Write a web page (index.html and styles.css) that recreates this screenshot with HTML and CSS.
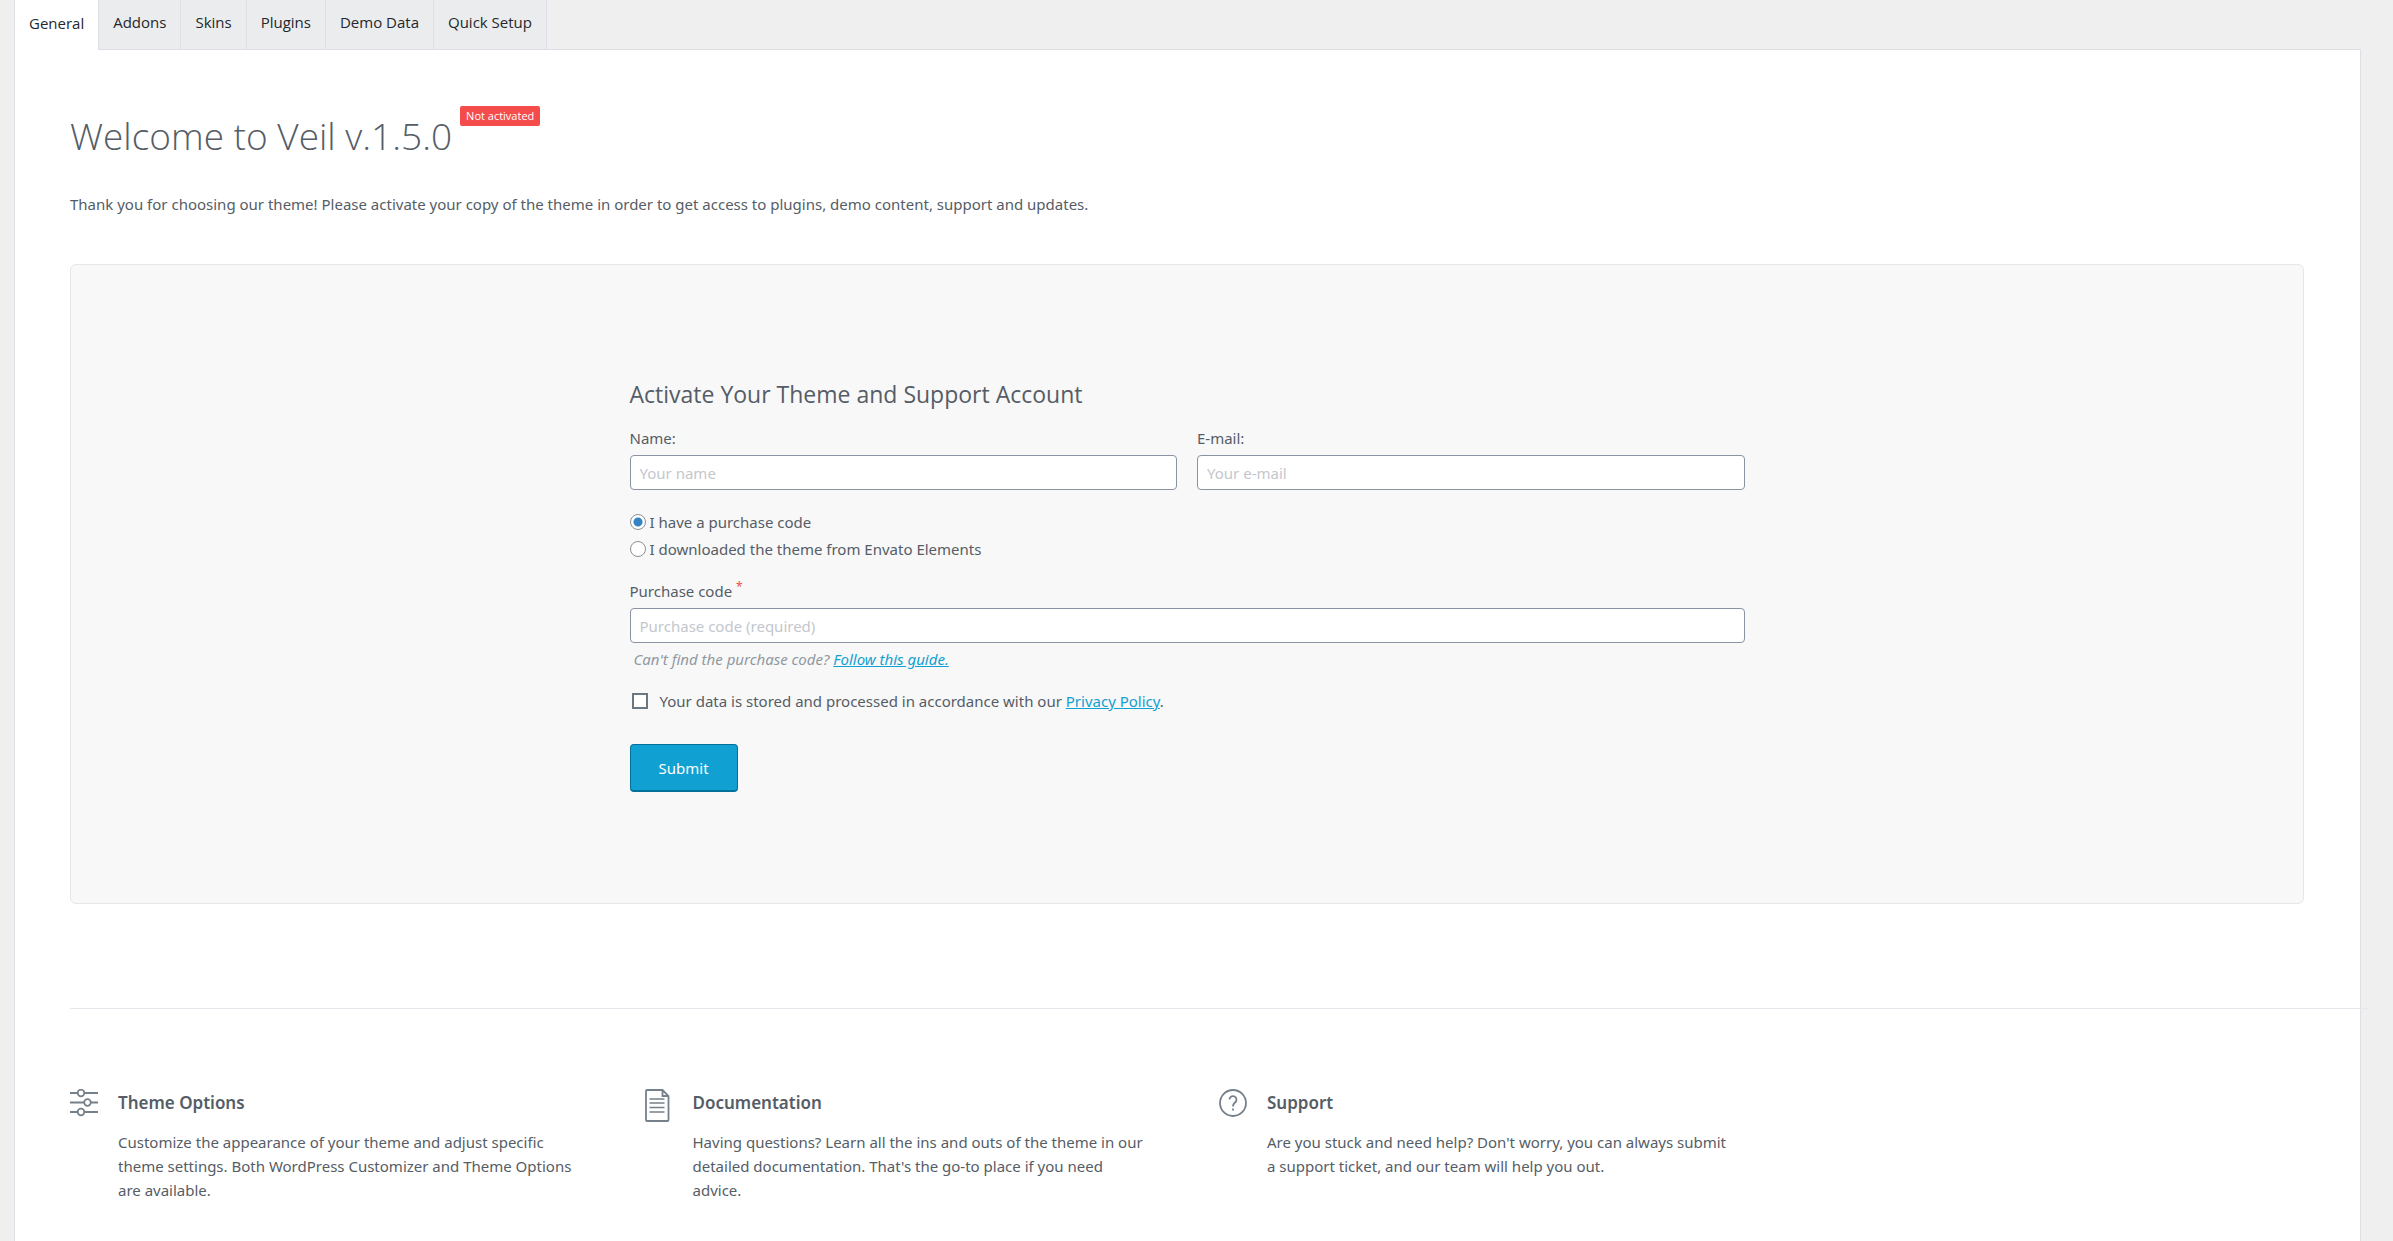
FILE: index.html
```
<!DOCTYPE html>
<html lang="en">
<head>
  <meta charset="UTF-8">
  <meta name="viewport" content="width=device-width, initial-scale=1.0">
  <title>Veil Dashboard</title>
  <link rel="stylesheet" href="styles.css">
</head>
<body>
  <nav class="tabs">
    <a class="tab active" href="#general">General</a>
    <a class="tab" href="#addons">Addons</a>
    <a class="tab" href="#skins">Skins</a>
    <a class="tab" href="#plugins">Plugins</a>
    <a class="tab" href="#demo">Demo Data</a>
    <a class="tab" href="#setup">Quick Setup</a>
  </nav>

  <main class="panel" id="general">
    <header class="welcome">
      <h1>Welcome to Veil v.1.5.0</h1>
      <span class="status">Not activated</span>
    </header>
    <p class="intro">Thank you for choosing our theme! Please activate your copy of the theme in order to get access to plugins, demo content, support and updates.</p>

    <section class="card">
      <form class="activate">
        <h2>Activate Your Theme and Support Account</h2>

        <div class="row">
          <div class="field">
            <label for="name">Name:</label>
            <input class="text" type="text" id="name" placeholder="Your name">
          </div>
          <div class="field">
            <label for="email">E-mail:</label>
            <input class="text" type="email" id="email" placeholder="Your e-mail">
          </div>
        </div>

        <div class="choices">
          <label class="choice"><input type="radio" name="source" checked> I have a purchase code</label>
          <label class="choice"><input type="radio" name="source"> I downloaded the theme from Envato Elements</label>
        </div>

        <div class="field">
          <label for="code">Purchase code <sup>*</sup></label>
          <input class="text" type="text" id="code" placeholder="Purchase code (required)">
        </div>
        <p class="hint">Can't find the purchase code? <a href="#guide">Follow this guide.</a></p>

        <div class="agree">
          <input type="checkbox" id="agree">
          <label for="agree">Your data is stored and processed in accordance with our <a href="#privacy">Privacy Policy</a>.</label>
        </div>

        <button class="btn" type="submit">Submit</button>
      </form>
    </section>

    <section class="features">
      <article class="feature">
        <svg class="icon" viewBox="0 0 28 38" width="28" height="38">
          <path d="M0 4h7M15 4h13M0 13.5h14M21 13.5h7M0 23h7M15 23h13"/>
          <circle cx="11" cy="4" r="3.3"/>
          <circle cx="17.5" cy="13.5" r="3.3"/>
          <circle cx="11" cy="23" r="3.3"/>
        </svg>
        <div class="feature-text">
          <h3>Theme Options</h3>
          <p>Customize the appearance of your theme and adjust specific theme settings. Both WordPress Customizer and Theme Options are available.</p>
        </div>
      </article>
      <article class="feature">
        <svg class="icon" viewBox="0 0 28 38" width="28" height="38">
          <path d="M1 2q0-1 1-1h15.5l6 6v24q0 1-1 1H2q-1 0-1-1zM17.5 1v6h6"/>
          <path class="thin" d="M4.5 10h15M4.5 14h15M4.5 18.5h15M4.5 23h15"/>
        </svg>
        <div class="feature-text">
          <h3>Documentation</h3>
          <p>Having questions? Learn all the ins and outs of the theme in our detailed documentation. That's the go-to place if you need<br> advice.</p>
        </div>
      </article>
      <article class="feature">
        <svg class="icon" viewBox="0 0 28 38" width="28" height="38">
          <circle cx="14" cy="14" r="13"/>
          <path d="M10.5 10.500a3.5 3.5 0 1 1 5.5 3q-2 1.500-2 4M14 19.5v2"/>
        </svg>
        <div class="feature-text">
          <h3>Support</h3>
          <p>Are you stuck and need help? Don't worry, you can always submit a support ticket, and our team will help you out.</p>
        </div>
      </article>
    </section>
  </main>
</body>
</html>
```
FILE: styles.css
```
* {
  box-sizing: border-box;
}

body {
  margin: 0;
  min-height: 100vh;
  display: flex;
  flex-direction: column;
  font-family: "Noto Sans", "Open Sans", sans-serif;
  font-size: 15px;
  line-height: 24px;
  color: #555d66;
  background: #efefef;
}

h1, h2, h3, p {
  margin: 0;
}

a {
  color: #11a0d2;
}

/* Tabs */
.tabs {
  display: flex;
  padding-left: 14px;
  font-family: "Open Sans", "Noto Sans", sans-serif;
}

.tab {
  height: 49px;
  padding: 10px 14px 0;
  border-right: 1px solid #dcdfe3;
  background: #ebecee;
  color: #23282d;
  font-weight: 500;
  text-decoration: none;
}

.tab.active {
  height: 50px;
  margin-bottom: -1px;
  padding-top: 11px;
  border-left: 1px solid #dcdfe3;
  background: #fff;
  z-index: 1;
}

/* Panel */
.panel {
  flex: 1;
  margin: 0 32px 0 14px;
  padding: 52px 56px 32px 55px;
  border: 1px solid #dcdfe3;
  border-bottom: none;
  background: #fff;
}

.welcome {
  display: flex;
  align-items: flex-start;
  gap: 8px;
  font-family: "Open Sans", "Noto Sans", sans-serif;
}

.welcome h1 {
  padding-top: 8px;
  font-size: 37px;
  line-height: 52px;
  font-weight: 300;
}

.status {
  margin-top: 4px;
  padding: 0 6px;
  border-radius: 2px;
  background: #f44b4b;
  color: #fff;
  font-size: 11px;
  line-height: 20px;
}

.intro {
  margin-top: 30px;
}

/* Activation form */
.card {
  margin-top: 48px;
  padding: 111px 25%;
  border: 1px solid #e5e7e9;
  border-radius: 6px;
  background: #f8f8f8;
}

.activate h2 {
  font-family: "Open Sans", "Noto Sans", sans-serif;
  font-size: 23px;
  line-height: 36px;
  font-weight: 400;
}

.row {
  display: flex;
  gap: 20px;
  margin-top: 14px;
}

.field {
  flex: 1;
}

.field label {
  display: block;
}

.text {
  display: block;
  width: 100%;
  height: 35px;
  margin-top: 5px;
  padding: 0 9px;
  border: 1px solid #8a93a2;
  border-radius: 4px;
  background: #fff;
  color: #555d66;
  font: inherit;
}

.text::placeholder {
  color: #c3c7cd;
}

.choices {
  margin: 20px 0 18px;
}

.choice {
  display: flex;
  align-items: center;
  gap: 4px;
  margin-bottom: 3px;
}

.choice input {
  appearance: none;
  width: 16px;
  height: 16px;
  margin: 0;
  border: 1px solid #8b8f94;
  border-radius: 50%;
  background: #fff;
}

.choice input:checked {
  background: radial-gradient(circle, #3582c4 4px, #fff 5px);
}

sup {
  color: #f44b4b;
  font-size: 12px;
  line-height: 0;
}

.hint {
  margin-top: 4px;
  padding-left: 4px;
  color: #8f98a1;
  font-style: italic;
}

.agree {
  display: flex;
  align-items: center;
  gap: 12px;
  margin: 18px 0 31px;
  padding-left: 2px;
}

.agree input {
  appearance: none;
  width: 16px;
  height: 16px;
  margin: 0;
  border: 2px solid #6c7781;
  background: #fff;
}

.btn {
  display: block;
  height: 48px;
  padding: 0 28px;
  border: 1px solid #00719b;
  border-bottom-width: 2px;
  border-radius: 4px;
  background: #11a0d2;
  color: #fff;
  font: inherit;
  cursor: pointer;
}

/* Features, the row runs out past the panel edge by one column gutter */
.features {
  display: grid;
  grid-template-columns: repeat(4, 1fr);
  margin: 104px -64px 0 0;
  padding-top: 80px;
  border-top: 1px solid #e5e7ec;
}

.feature {
  display: flex;
  gap: 20px;
  padding-right: 63px;
}

.icon {
  flex: none;
  fill: none;
  stroke: #76808b;
  stroke-width: 1.8;
}

.icon .thin {
  stroke-width: 1.5;
}

.feature-text {
  flex: 1;
}

.feature h3 {
  margin-bottom: 13px;
  font-size: 17px;
  line-height: 28px;
  font-weight: 600;
}
```
